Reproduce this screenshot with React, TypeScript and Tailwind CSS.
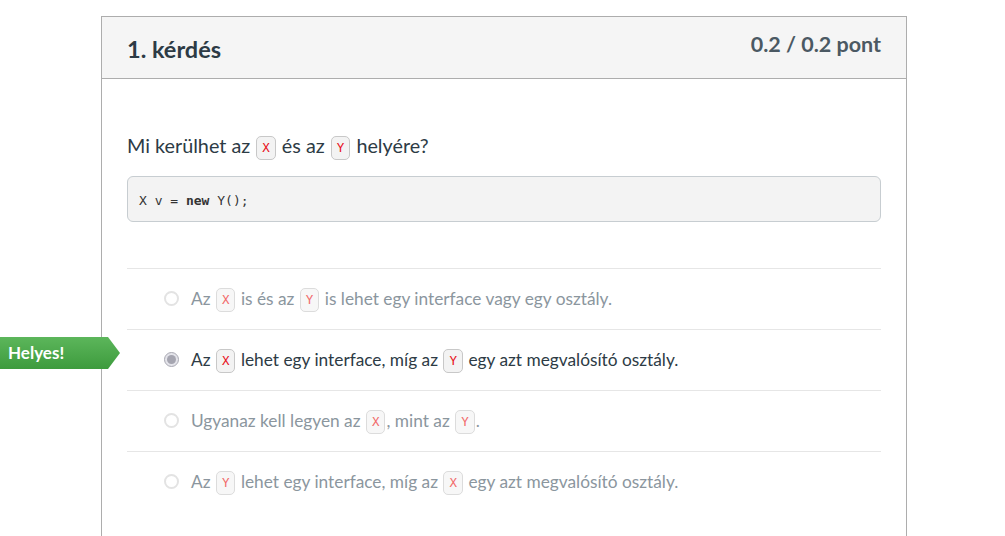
import React from "react";

function Chip({ children, dim }: { children: React.ReactNode; dim?: boolean }) {
  return (
    <span
      className={`mx-[1px] inline-flex h-[24px] items-center rounded-[5px] border px-[5px] align-middle font-['DejaVu_Sans_Mono',monospace] text-[12.5px] ${
        dim ? "border-[#dcdcdc] bg-[#f7f7f7] text-[#f26b6b]" : "border-[#c8c8c8] bg-[#f3f3f3] text-[#e8101a]"
      }`}
    >
      {children}
    </span>
  );
}

function Radio({ checked }: { checked?: boolean }) {
  return checked ? (
    <span className="flex h-[15px] w-[15px] shrink-0 items-center justify-center rounded-full border border-[#a9a9b3] bg-[#e4e4ea]">
      <span className="h-[9px] w-[9px] rounded-full bg-[#a5a5b0]" />
    </span>
  ) : (
    <span className="h-[15px] w-[15px] shrink-0 rounded-full border-2 border-[#e3e3e3] bg-white" />
  );
}

function Answer({ checked, children }: { checked?: boolean; children: React.ReactNode }) {
  return (
    <div className="flex h-[61px] items-center gap-[12px] border-t border-[#e6e6e6] pl-[37px]">
      <Radio checked={checked} />
      <span className={`text-[17.3px] ${checked ? "text-[#2d3b45]" : "text-[#8b969e]"}`}>{children}</span>
    </div>
  );
}

export default function App() {
  return (
    <div className="relative h-[536px] w-full overflow-hidden bg-white pt-[16px] font-['Lato','Liberation_Sans',sans-serif] text-[#2d3b45]">
      <div className="ml-[101px] h-[600px] w-[806px] border border-[#adadad]">
        <div className="flex h-[62px] items-start justify-between border-b border-[#adadad] bg-[#f5f5f5] px-[25px]">
          <h2 className="mt-[17px] text-[23.5px] leading-[30px] font-bold">1. kérdés</h2>
          <div className="mt-[13px] text-[21.5px] leading-[28px] font-bold text-[#4b5963]">0.2 / 0.2 pont</div>
        </div>
        <div className="px-[25px] pt-[52px]">
          <p className="text-[19.8px] leading-[28px]">
            Mi kerülhet az <Chip>X</Chip> és az <Chip>Y</Chip> helyére?
          </p>
          <pre className="mt-[16px] rounded-[6px] border border-[#c7cdd1] bg-[#f3f3f3] px-[11px] pt-[16px] pb-[12px] font-['DejaVu_Sans_Mono',monospace] text-[13px] leading-[16px] text-[#333]">
            X v = <b>new</b> Y();
          </pre>
          <div className="mt-[46px]">
            <Answer>
              Az <Chip dim>X</Chip> is és az <Chip dim>Y</Chip> is lehet egy interface vagy egy osztály.
            </Answer>
            <Answer checked>
              Az <Chip>X</Chip> lehet egy interface, míg az <Chip>Y</Chip> egy azt megvalósító osztály.
            </Answer>
            <Answer>
              Ugyanaz kell legyen az <Chip dim>X</Chip>, mint az <Chip dim>Y</Chip>.
            </Answer>
            <Answer>
              Az <Chip dim>Y</Chip> lehet egy interface, míg az <Chip dim>X</Chip> egy azt megvalósító osztály.
            </Answer>
          </div>
        </div>
      </div>

      <div className="absolute top-[337px] left-0 flex h-[32px] items-center">
        <div className="flex h-full w-[108px] items-center bg-gradient-to-b from-[#5cb65b] to-[#3d9b3d] pl-[8px] text-[17px] font-bold text-white">
          Helyes!
        </div>
        <svg width="12" height="32" viewBox="0 0 12 32" className="block">
          <defs>
            <linearGradient id="g" x1="0" y1="0" x2="0" y2="1">
              <stop offset="0" stopColor="#5cb65b" />
              <stop offset="1" stopColor="#3d9b3d" />
            </linearGradient>
          </defs>
          <polygon points="0,0 12,16 0,32" fill="url(#g)" />
        </svg>
      </div>
    </div>
  );
}
